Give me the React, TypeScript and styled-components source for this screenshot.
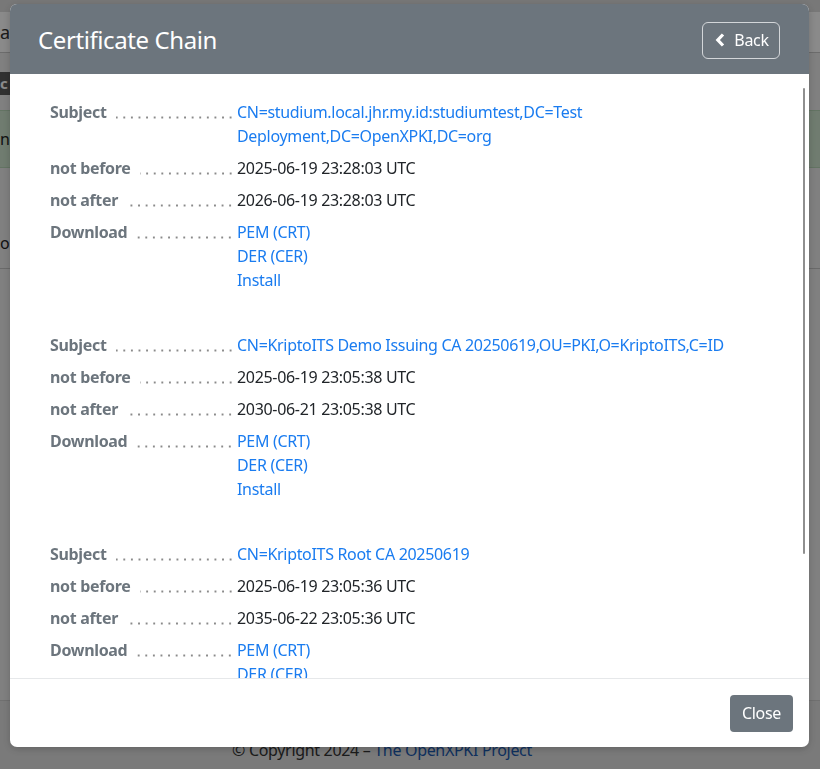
import React from 'react';
import styled, { createGlobalStyle } from 'styled-components';

const GlobalStyle = createGlobalStyle`
  html, body {
    margin: 0;
    padding: 0;
    height: 100%;
  }
  body {
    font-family: "Noto Sans", "Open Sans", sans-serif;
    font-size: 16px;
    letter-spacing: -0.32px;
    color: #212529;
    overflow: hidden;
  }
`;

const Page = styled.div`
  height: 769px;
  display: flex;
  flex-direction: column;
  background: #ededed;
`;

const TopStrip = styled.div`
  height: 12px;
  background: #dedede;
`;

const NavBar = styled.div`
  height: 40px;
  background: #ffffff;
  border-bottom: 1px solid #c8c8c8;
  display: flex;
  align-items: center;
  font-size: 18px;
  color: #333;
`;

const DarkTab = styled.div`
  margin-top: 19px;
  width: 14px;
  height: 23px;
  background: #5a5a5a;
  color: #fff;
  font-weight: 700;
  font-size: 15px;
  line-height: 23px;
  overflow: hidden;
`;

const Alert = styled.div`
  margin-top: 15px;
  height: 56px;
  background: #cfe6cf;
  border-top: 1px solid #b8d6b8;
  border-bottom: 1px solid #b8d6b8;
  display: flex;
  align-items: center;
  color: #222;
`;

const PageText = styled.div`
  margin-top: 60px;
  height: 30px;
  line-height: 30px;
  color: #222;
`;

const PageRule = styled.div`
  margin-top: 10px;
  border-top: 1px solid #c4c4c4;
`;

const PageFill = styled.div`
  flex: 1;
`;

const PageFooter = styled.footer`
  height: 69px;
  background: #e2e2e2;
  border-top: 1px solid #cfcfcf;
  display: flex;
  justify-content: center;
  padding-right: 56px;
  padding-top: 38px;
  box-sizing: border-box;
  color: #333;
  font-size: 16px;

  a {
    color: #1b5ab0;
    text-decoration: none;
  }
`;

const Backdrop = styled.div`
  position: fixed;
  inset: 0;
  background: rgba(0, 0, 0, 0.46);
`;

const Modal = styled.div`
  position: fixed;
  left: 10px;
  top: 4px;
  width: 799px;
  height: 743px;
  background: #fff;
  border-radius: 7px;
  overflow: hidden;
  display: flex;
  flex-direction: column;
  box-shadow: 0 2px 8px rgba(0, 0, 0, 0.2);
`;

const Header = styled.div`
  height: 70px;
  flex-shrink: 0;
  background: #6c757d;
  display: flex;
  align-items: center;
  justify-content: space-between;
  padding: 0 29px 0 28px;
  box-sizing: border-box;
`;

const Title = styled.h2`
  margin: 0;
  font-size: 24px;
  font-weight: 400;
  color: #fff;
  letter-spacing: -0.4px;
`;

const BackButton = styled.button`
  height: 37px;
  width: 78px;
  border: 1px solid #d3d6d9;
  border-radius: 6px;
  background: transparent;
  color: #fff;
  font-family: inherit;
  font-size: 16px;
  letter-spacing: inherit;
  display: flex;
  align-items: center;
  justify-content: center;
  gap: 8px;
  padding: 0 0 0 2px;
  margin-top: 2px;
`;

const Body = styled.div`
  position: relative;
  flex: 1;
  overflow: hidden;
  padding: 26px 40px 0 40px;
`;

const ScrollThumb = styled.div`
  position: absolute;
  right: 4px;
  top: 14px;
  width: 2px;
  height: 466px;
  background: #8f8f8f;
  border-radius: 1px;
`;

const Section = styled.dl`
  margin: 0 0 41px 0;
`;

const Row = styled.div`
  display: grid;
  grid-template-columns: 187px 1fr;
  margin-bottom: 8px;
  line-height: 24px;
`;

const Label = styled.dt`
  display: flex;
  align-self: start;
  height: 24px;
  font-weight: 700;
  color: #6c757d;
  white-space: nowrap;
`;

const Leader = styled.span`
  flex: 1;
  margin: 0 3px 0 9px;
  background-image: radial-gradient(circle, #8a8a8a 0.9px, transparent 1.3px);
  background-size: 7.6px 3px;
  background-repeat: repeat-x;
  background-position: right 0 bottom 5px;
`;

const Value = styled.dd`
  margin: 0;
  color: #212529;
`;

const Link = styled.a<{ $block?: boolean }>`
  display: ${({ $block }) => ($block ? 'block' : 'inline')};
  color: #1a7cf0;
  text-decoration: none;
`;

const Footer = styled.div`
  height: 69px;
  flex-shrink: 0;
  border-top: 1px solid #e6e8ea;
  display: flex;
  align-items: center;
  justify-content: flex-end;
  padding: 0 16px;
  box-sizing: border-box;
`;

const CloseButton = styled.button`
  height: 37px;
  padding: 0 12px;
  border: none;
  border-radius: 4px;
  background: #6c757d;
  color: #fff;
  font-family: inherit;
  font-size: 16px;
  letter-spacing: inherit;
`;

const ChevronLeft = () => (
  <svg width="11" height="14" viewBox="0 0 11 14">
    <path d="M8 1.5 L2.8 7 L8 12.5" fill="none" stroke="#fff" strokeWidth="3.2" strokeLinejoin="miter" />
  </svg>
);

type Cert = {
  subject: string;
  notBefore: string;
  notAfter: string;
};

const chain: Cert[] = [
  {
    subject: 'CN=studium.local.jhr.my.id:studiumtest,DC=Test Deployment,DC=OpenXPKI,DC=org',
    notBefore: '2025-06-19 23:28:03 UTC',
    notAfter: '2026-06-19 23:28:03 UTC',
  },
  {
    subject: 'CN=KriptoITS Demo Issuing CA 20250619,OU=PKI,O=KriptoITS,C=ID',
    notBefore: '2025-06-19 23:05:38 UTC',
    notAfter: '2030-06-21 23:05:38 UTC',
  },
  {
    subject: 'CN=KriptoITS Root CA 20250619',
    notBefore: '2025-06-19 23:05:36 UTC',
    notAfter: '2035-06-22 23:05:36 UTC',
  },
];

const Field = ({ label, children }: { label: string; children: React.ReactNode }) => (
  <Row>
    <Label>
      {label}
      <Leader />
    </Label>
    <Value>{children}</Value>
  </Row>
);

export default function App() {
  return (
    <>
      <GlobalStyle />
      <Page>
        <TopStrip />
        <NavBar>at</NavBar>
        <DarkTab>c</DarkTab>
        <Alert>n</Alert>
        <PageText>o</PageText>
        <PageRule />
        <PageFill />
        <PageFooter>
          © Copyright 2024 –&nbsp;<a href="#">The OpenXPKI Project</a>
        </PageFooter>
      </Page>
      <Backdrop />
      <Modal>
        <Header>
          <Title>Certificate Chain</Title>
          <BackButton>
            <ChevronLeft />
            Back
          </BackButton>
        </Header>
        <Body>
          {chain.map((cert) => (
            <Section key={cert.subject}>
              <Field label="Subject">
                <Link href="#">{cert.subject}</Link>
              </Field>
              <Field label="not before">{cert.notBefore}</Field>
              <Field label="not after">{cert.notAfter}</Field>
              <Field label="Download">
                <Link href="#" $block>PEM (CRT)</Link>
                <Link href="#" $block>DER (CER)</Link>
                <Link href="#" $block>Install</Link>
              </Field>
            </Section>
          ))}
          <ScrollThumb />
        </Body>
        <Footer>
          <CloseButton>Close</CloseButton>
        </Footer>
      </Modal>
    </>
  );
}
